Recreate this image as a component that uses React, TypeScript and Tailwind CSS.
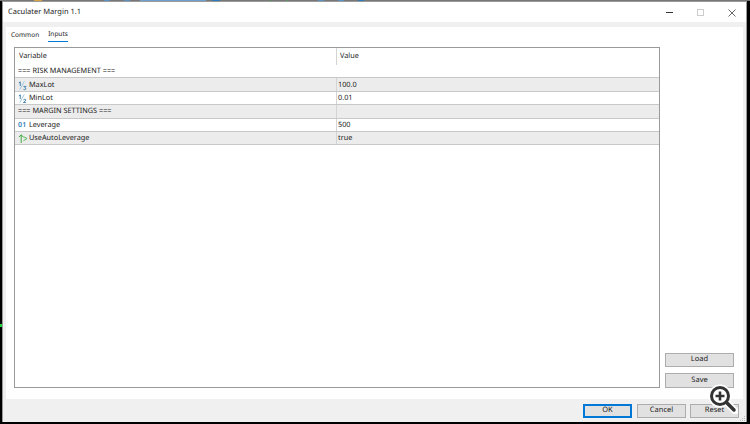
import { ReactNode } from "react";

function Btn({ label, primary, className }: { label: string; primary?: boolean; className?: string }) {
  return (
    <div
      className={`flex items-center justify-center text-[7.5px] text-[#222] bg-[#e1e1e1] ${
        primary ? "border-2 border-[#0078d7]" : "border border-[#adadad]"
      } ${className ?? ""}`}
    >
      {label}
    </div>
  );
}

function Row({ icon, name, value, shaded, noDivider }: { icon?: ReactNode; name: string; value?: string; shaded?: boolean; noDivider?: boolean }) {
  return (
    <div className={`flex h-[13.4px] border-b border-[#c8c8c8] items-center ${shaded ? "bg-[#ececec]" : "bg-white"}`}>
      <div className={`w-[322px] flex items-center h-full shrink-0 pl-[3px] pt-px ${noDivider ? "" : "border-r border-[#d4d4d4]"}`}>
        {icon && <span className="w-[11px] flex items-center">{icon}</span>}
        <span className="whitespace-pre">{name}</span>
      </div>
      <span className={`ml-px pt-px ${noDivider ? "pl-px" : ""}`}>{value}</span>
    </div>
  );
}

const Fraction = ({ digit }: { digit: "2" | "3" }) => (
  <svg width="9" height="11" viewBox="0 0 10 11" fill="none" strokeWidth="1">
    <path d="M1 2.5 2.5 1.5V6" stroke="#2a6f9f" />
    <path d="M7 1 2 10" stroke="#8fc0e0" />
    <path d={digit === "3" ? "M6 6.5H9L7.5 8Q9.5 8.5 8.5 9.8 7.2 10.5 6 9.8" : "M6 7Q7.5 5.6 8.8 7 8.8 8 6 10H9"} stroke="#2a6f9f" strokeWidth="0.9" />
  </svg>
);

const Binary = () => <span className="text-[7px] font-semibold leading-none tracking-[0.2px] text-[#2f7fb8]">01</span>;

const Bool = () => (
  <svg width="10" height="11" viewBox="0 0 11 11" fill="none" stroke="#3fa83f" strokeWidth="1.1">
    <path d="M3.5 10.5V1.5M1 4 3.5 1.5 6 4" />
    <path d="M6 3.5 10 5.5 6 8" stroke="#57b957" />
  </svg>
);

const TOP_MARKS = ["bg-[#d9a441] w-[8px]", "bg-[#777] w-[62px]", "bg-[#5b8fc0] w-[6px]", "bg-[#777] w-[14px]", "bg-[#5b8fc0] w-[6px]", "bg-[#777] w-[10px]", "bg-[#6f9fcf] w-[66px]", "bg-[#777] w-[6px]", "bg-[#2f78b5] w-[8px]", "bg-[#777] w-[50px]", "bg-[#3fae3f] w-px", "bg-[#777] w-[16px]", "bg-[#3fae3f] w-px", "bg-[#777] w-[30px]", "bg-[#5b8fc0] w-[6px]", "bg-[#777] w-[14px]", "bg-[#5b8fc0] w-[6px]", "bg-[#777] w-[14px]", "bg-[#2f78b5] w-[6px]", "bg-[#777] flex-1"];

export default function App() {
  return (
    <div className="relative w-[750px] h-[424px] bg-black overflow-hidden font-['Noto_Sans',sans-serif] [text-rendering:geometricPrecision]">
      <div className="flex h-px pl-[34px] bg-[#777]">
        {TOP_MARKS.map((m, i) => (
          <span key={i} className={`h-px ${m}`} />
        ))}
      </div>
      <div className="ml-[2px] w-[745px] h-[421px] flex flex-col bg-[#f0f0f0] border-t border-l border-r border-[#9a9a9a]">
        <div className="h-[20px] bg-white flex items-center shrink-0 pl-[5px] pt-px text-[7.5px] text-[#222]">
          <span className="flex-1">Caculater Margin 1.1</span>
          <span className="w-[7px] h-px bg-[#333] mr-[24px]" />
          <span className="w-[7px] h-[7px] border border-[#ccc] mr-[24px]" />
          <svg width="8" height="8" viewBox="0 0 8 8" className="mr-[10px]" stroke="#444" strokeWidth="0.8">
            <path d="M0.5 0.5l7 7M7.5 0.5l-7 7" />
          </svg>
        </div>
        <div className="h-[5px] shrink-0" />
        <div className="ml-[3px] mr-[3px] bg-white flex-1 flex flex-col">
          <div className="h-[15px] flex items-end text-[6.5px] text-[#222] gap-[9px] pl-[5px] shrink-0">
            <span className="pb-[2px]">Common</span>
            <span className="pb-[2px] border-b-[1.5px] border-[#0078d7]">Inputs</span>
          </div>
          <div className="flex flex-1 pr-[3px] pb-[11px] pt-[5px]">
            <div className="ml-[8px] w-[646px] h-[341px] border border-[#9a9a9a] text-[7.3px] text-[#222]">
              <div className="flex h-[17px] bg-white">
                <div className="w-[322px] pl-[4px] pt-[3px] border-r border-[#d4d4d4]">Variable</div>
                <div className="pl-[3px] pt-[3px]">Value</div>
              </div>
              <Row name="=== RISK MANAGEMENT ===" noDivider />
              <Row icon={<Fraction digit="3" />} name="MaxLot" value="100.0" shaded />
              <Row icon={<Fraction digit="2" />} name="MinLot" value="0.01" />
              <Row name="=== MARGIN SETTINGS ===" shaded />
              <Row icon={<Binary />} name="Leverage" value="500" />
              <Row icon={<Bool />} name="UseAutoLeverage" value="true" shaded />
            </div>
            <div className="flex-1 flex flex-col justify-end gap-[6px] pl-[5px]">
              <Btn label="Load" className="w-[69px] h-[14px]" />
              <Btn label="Save" className="w-[69px] h-[15px]" />
            </div>
          </div>
        </div>
        <div className="h-[24px] shrink-0 flex items-start pt-[5px] justify-end pr-[7px] gap-[5px]">
          <Btn label="OK" primary className="w-[49px] h-[14px]" />
          <Btn label="Cancel" className="w-[49px] h-[14px] mr-[-1px]" />
          <Btn label="Reset" className="w-[49px] h-[14px]" />
        </div>
      </div>
      {/* magnifier cursor over the buttons */}
      <svg className="absolute left-[708px] top-[384px]" width="30" height="30" viewBox="0 0 30 30" fill="none">
        <path d="M17 17l10 10" stroke="white" strokeWidth="7" strokeLinecap="round" />
        <circle cx="12" cy="12" r="11.5" fill="white" />
        <path d="M18 18l8 8" stroke="#333" strokeWidth="3.5" strokeLinecap="round" />
        <circle cx="12" cy="12" r="8.5" fill="white" stroke="#333" strokeWidth="3" />
        <path d="M12 7.5v9M7.5 12h9" stroke="#333" strokeWidth="2.6" />
      </svg>
      {/* resize grip */}
      <svg className="absolute left-[740px] top-[416px]" width="6" height="6" viewBox="0 0 6 6" fill="#bbb">
        <rect x="4" y="0" width="1" height="1" />
        <rect x="2" y="2" width="1" height="1" />
        <rect x="4" y="2" width="1" height="1" />
        <rect x="0" y="4" width="1" height="1" />
        <rect x="2" y="4" width="1" height="1" />
        <rect x="4" y="4" width="1" height="1" />
      </svg>
      <span className="absolute left-0 top-[324px] w-[2px] h-[3px] bg-[#22d33c]" />
    </div>
  );
}
